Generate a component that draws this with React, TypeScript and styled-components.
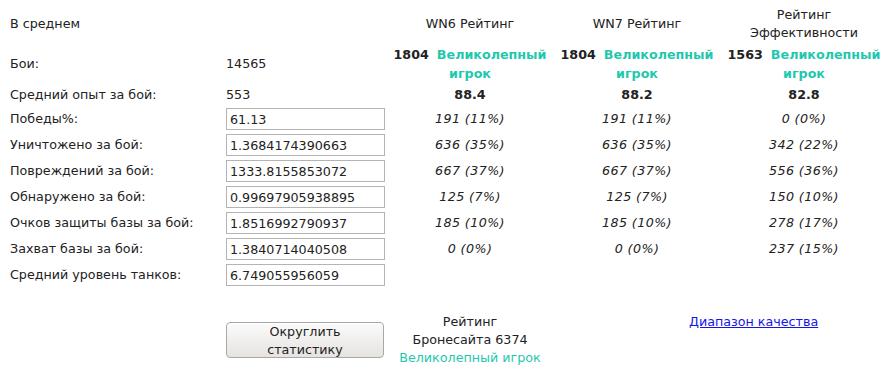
import React from "react";
import styled, { createGlobalStyle } from "styled-components";

const Global = createGlobalStyle`
  html, body { margin: 0; padding: 0; background: #fff; }
  body { font-family: "DejaVu Sans", Verdana, sans-serif; font-size: 12.7px; color: #222; }
`;

const Page = styled.div`
  padding: 5px 0 0 8px;
  width: 881px;
  box-sizing: border-box;
`;

const Grid = styled.div`
  display: grid;
  grid-template-columns: 216px 166px 160px 174px 160px;
`;

const Cell = styled.div<{ $h: number; $align?: "left" | "center"; $bold?: boolean; $italic?: boolean; $lh?: number }>`
  height: ${(p) => p.$h}px;
  display: flex;
  flex-direction: column;
  justify-content: center;
  align-items: ${(p) => (p.$align === "center" ? "center" : "flex-start")};
  text-align: ${(p) => p.$align ?? "left"};
  padding: 0 ${(p) => (p.$align === "center" ? 0 : 2)}px;
  line-height: ${(p) => p.$lh ?? 18}px;
  font-weight: ${(p) => (p.$bold ? "bold" : "normal")};
  font-style: ${(p) => (p.$italic ? "italic" : "normal")};
  letter-spacing: ${(p) => (p.$italic ? "0.4px" : "normal")};
  white-space: nowrap;
`;

const Num = styled.span`
  font-weight: bold;
  margin-right: 8px;
`;

const Good = styled.span<{ $bold?: boolean }>`
  color: #1fc8ad;
  font-weight: ${(p) => (p.$bold ? "bold" : "normal")};
`;

const Field = styled.input`
  width: 159px;
  height: 22px;
  box-sizing: border-box;
  border: 1px solid #b4b4b4;
  padding: 0 3px;
  font-family: "DejaVu Sans", Verdana, sans-serif;
  font-size: 12.7px;
  color: #222;
  margin: 0;
  outline: none;
  background: #fff;
`;

const Bottom = styled.div`
  display: grid;
  grid-template-columns: 216px 166px 160px 334px;
  margin-top: 25px;
`;

const Button = styled.button`
  width: 158px;
  height: 36px;
  box-sizing: border-box;
  border: 1px solid #a8a8a8;
  border-radius: 4px;
  background: linear-gradient(#fbfbfb, #e6e3e0);
  font-family: "DejaVu Sans", Verdana, sans-serif;
  font-size: 12.7px;
  line-height: 18px;
  color: #222;
  padding: 0;
  box-shadow: inset 0 1px 0 #fff;
`;

const BottomCell = styled.div<{ $align?: "top" | "center"; $pl?: number }>`
  display: flex;
  flex-direction: column;
  justify-content: ${(p) => (p.$align === "top" ? "flex-start" : "center")};
  align-items: ${(p) => (p.$pl !== undefined ? "flex-start" : "center")};
  text-align: center;
  line-height: 18px;
  white-space: nowrap;
  padding: 0 0 0 ${(p) => p.$pl ?? 0}px;
`;

const ButtonCell = styled.div`
  display: flex;
  align-items: center;
  padding-left: 2px;
`;

const Link = styled.a`
  color: #1515e6;
  text-decoration: underline;
`;

const rows = [
  ["Победы%:", "61.13", "191 (11%)", "191 (11%)", "0 (0%)"],
  ["Уничтожено за бой:", "1.3684174390663", "636 (35%)", "636 (35%)", "342 (22%)"],
  ["Повреждений за бой:", "1333.8155853072", "667 (37%)", "667 (37%)", "556 (36%)"],
  ["Обнаружено за бой:", "0.99697905938895", "125 (7%)", "125 (7%)", "150 (10%)"],
  ["Очков защиты базы за бой:", "1.8516992790937", "185 (10%)", "185 (10%)", "278 (17%)"],
  ["Захват базы за бой:", "1.3840714040508", "0 (0%)", "0 (0%)", "237 (15%)"],
  ["Средний уровень танков:", "6.749055956059", "", "", ""],
];

const Rating = ({ n }: { n: string }) => (
  <>
    <span>
      <Num>{n}</Num>
      <Good $bold>Великолепный</Good>
    </span>
    <Good $bold>игрок</Good>
  </>
);

export default function App() {
  return (
    <Page>
      <Global />
      <Grid>
        <Cell $h={38}>В среднем</Cell>
        <Cell $h={38} />
        <Cell $h={38} $align="center">WN6 Рейтинг</Cell>
        <Cell $h={38} $align="center">WN7 Рейтинг</Cell>
        <Cell $h={38} $align="center">
          <span>Рейтинг</span>
          <span>Эффективности</span>
        </Cell>

        <Cell $h={41}>Бои:</Cell>
        <Cell $h={41}>14565</Cell>
        <Cell $h={41} $align="center" $lh={19}><Rating n="1804" /></Cell>
        <Cell $h={41} $align="center" $lh={19}><Rating n="1804" /></Cell>
        <Cell $h={41} $align="center" $lh={19}><Rating n="1563" /></Cell>

        <Cell $h={22}>Средний опыт за бой:</Cell>
        <Cell $h={22}>553</Cell>
        <Cell $h={22} $align="center" $bold>88.4</Cell>
        <Cell $h={22} $align="center" $bold>88.2</Cell>
        <Cell $h={22} $align="center" $bold>82.8</Cell>

        {rows.map((r) => (
          <React.Fragment key={r[0]}>
            <Cell $h={26}>{r[0]}</Cell>
            <Cell $h={26}>
              <Field defaultValue={r[1]} readOnly />
            </Cell>
            <Cell $h={26} $align="center" $italic>{r[2]}</Cell>
            <Cell $h={26} $align="center" $italic>{r[3]}</Cell>
            <Cell $h={26} $align="center" $italic>{r[4]}</Cell>
          </React.Fragment>
        ))}
      </Grid>
      <Bottom>
        <div />
        <ButtonCell>
          <Button>Округлить<br />статистику</Button>
        </ButtonCell>
        <BottomCell>
          <span>Рейтинг</span>
          <span>Бронесайта 6374</span>
          <Good>Великолепный игрок</Good>
        </BottomCell>
        <BottomCell $align="top" $pl={139}>
          <Link href="#">Диапазон качества</Link>
        </BottomCell>
      </Bottom>
    </Page>
  );
}
